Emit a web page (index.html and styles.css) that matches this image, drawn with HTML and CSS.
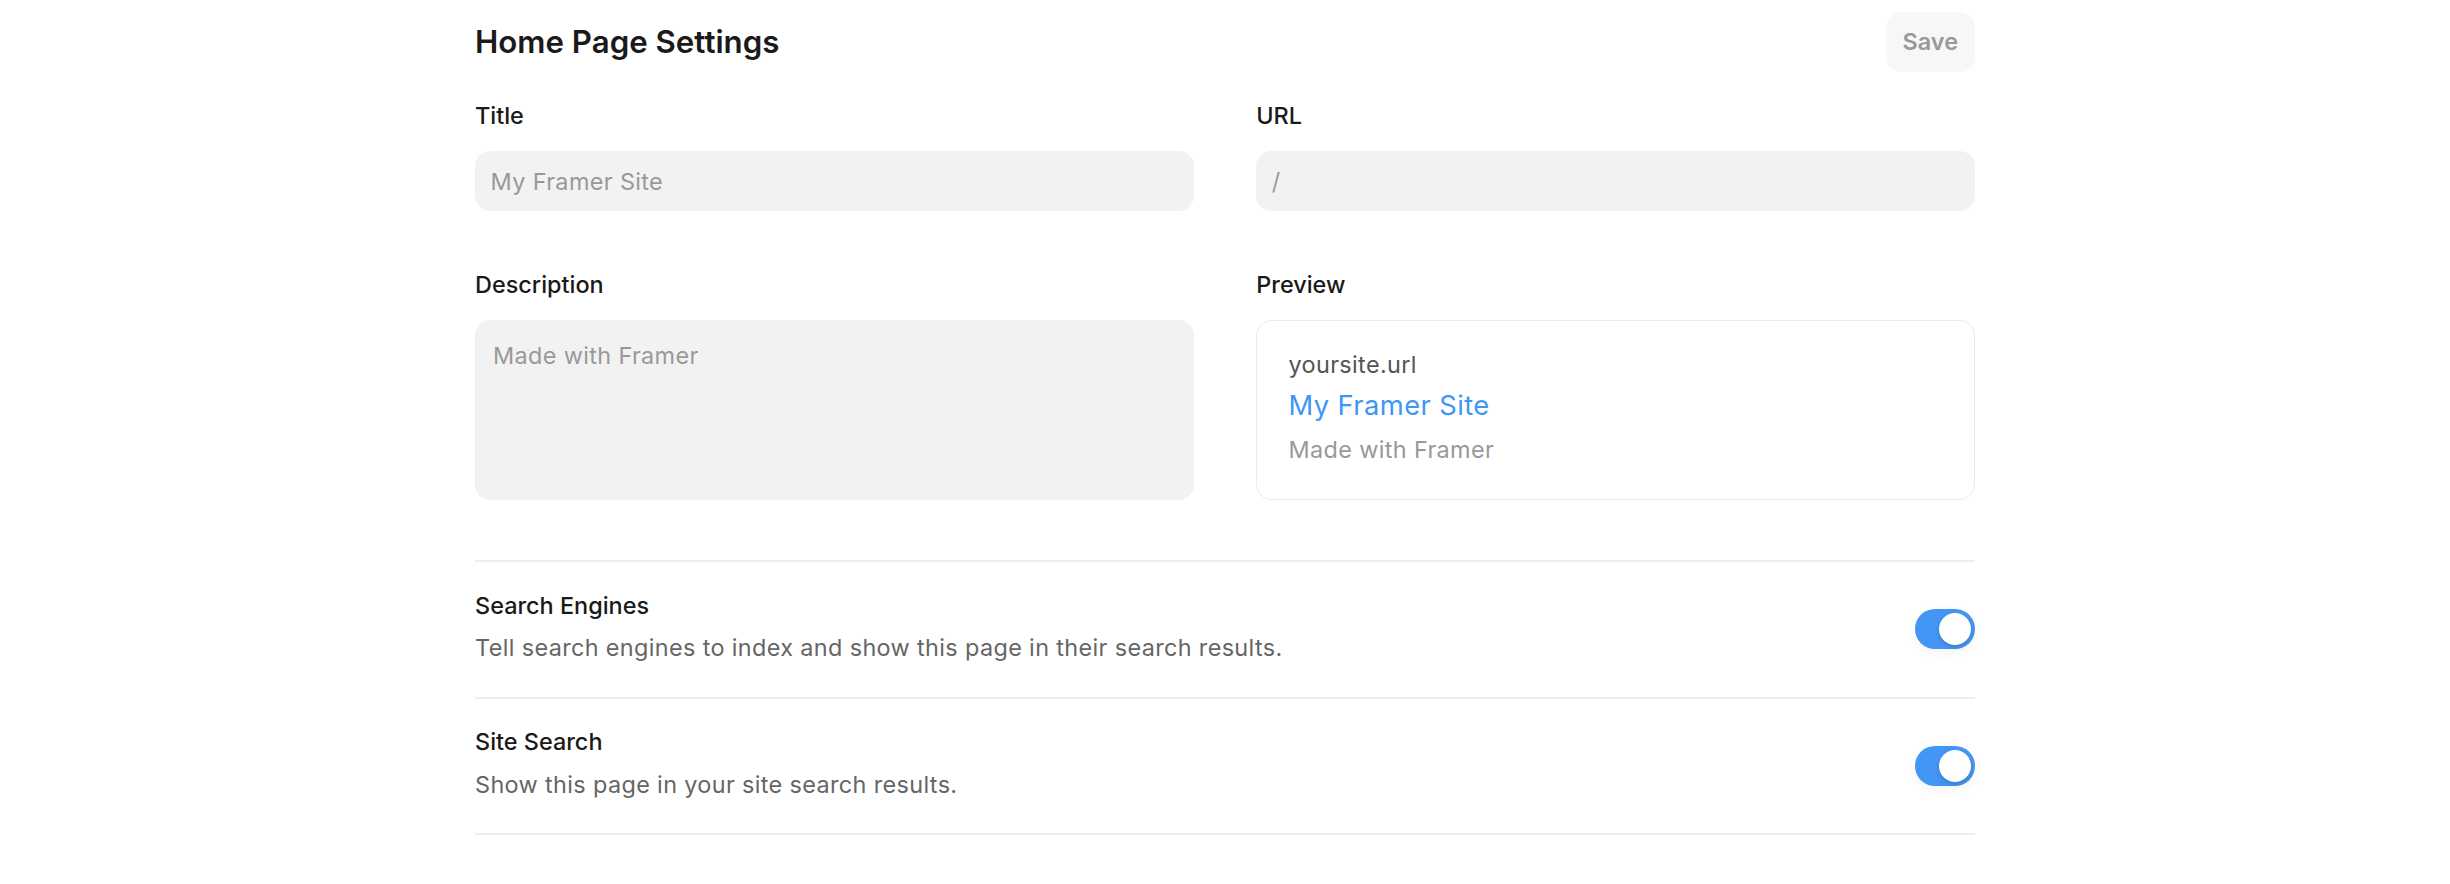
FILE: index.html
```html
<!DOCTYPE html>
<html lang="en">
<head>
<meta charset="utf-8">
<title>Home Page Settings</title>
<link rel="stylesheet" href="styles.css">
</head>
<body>
<main class="page">
  <header class="header">
    <h1 class="heading">Home Page Settings</h1>
    <button class="save" type="button">Save</button>
  </header>

  <section class="form">
    <div class="field">
      <div class="label">Title</div>
      <div class="input">My Framer Site</div>
    </div>
    <div class="field">
      <div class="label">URL</div>
      <div class="input">/</div>
    </div>
    <div class="field">
      <div class="label">Description</div>
      <div class="textarea">Made with Framer</div>
    </div>
    <div class="field">
      <div class="label">Preview</div>
      <div class="preview">
        <div class="preview-url">yoursite.url</div>
        <div class="preview-title">My Framer Site</div>
        <div class="preview-desc">Made with Framer</div>
      </div>
    </div>
  </section>

  <section class="rows">
    <div class="row">
      <div class="row-text">
        <div class="row-title">Search Engines</div>
        <div class="row-desc">Tell search engines to index and show this page in their search results.</div>
      </div>
      <div class="toggle"><div class="knob"></div></div>
    </div>
    <div class="row">
      <div class="row-text">
        <div class="row-title">Site Search</div>
        <div class="row-desc">Show this page in your site search results.</div>
      </div>
      <div class="toggle"><div class="knob"></div></div>
    </div>
  </section>
</main>
</body>
</html>
```

FILE: styles.css
```css
* {
  box-sizing: border-box;
}

body {
  margin: 0;
  background: #ffffff;
  font-family: Inter, "Noto Sans", "Liberation Sans", sans-serif;
  color: #1a1a1a;
}

.page {
  width: 1500px;
  margin: 0 auto;
  padding-top: 12px;
}

.header {
  display: flex;
  justify-content: space-between;
  align-items: center;
  height: 60px;
}

.heading {
  margin: 0;
  font-size: 31.25px;
  font-weight: 600;
  line-height: 38px;
  color: #1a1a1a;
}

.save {
  height: 60px;
  padding: 0 17px;
  border: none;
  border-radius: 15.6px;
  background: #f7f7f7;
  color: #999999;
  font-family: Inter, "Noto Sans", "Liberation Sans", sans-serif;
  font-size: 23.44px;
  font-weight: 600;
  line-height: 1;
}

.form {
  display: grid;
  grid-template-columns: 1fr 1fr;
  column-gap: 62.5px;
  row-gap: 59.5px;
  margin-top: 29.5px;
}

.field {
  display: flex;
  flex-direction: column;
  gap: 21.5px;
}

.label {
  font-size: 23.44px;
  font-weight: 500;
  line-height: 28px;
  color: #1a1a1a;
}

.input {
  display: flex;
  align-items: center;
  height: 60px;
  padding: 0 15.6px;
  border-radius: 15.6px;
  background: #f2f2f2;
  font-size: 23.44px;
  letter-spacing: 0.015em;
  color: #999999;
}

.textarea {
  height: 180px;
  padding: 18px;
  border-radius: 15.6px;
  background: #f2f2f2;
  font-size: 23.44px;
  line-height: 1.5;
  letter-spacing: 0.015em;
  color: #999999;
}

.preview {
  height: 180px;
  padding: 28px 31.25px;
  border: 1.5px solid #ebebeb;
  border-radius: 15.6px;
}

.preview-url {
  font-size: 23.44px;
  line-height: 32px;
  letter-spacing: 0.015em;
  color: #555555;
  margin-bottom: 9px;
}

.preview-title {
  font-size: 27.34px;
  line-height: 32px;
  letter-spacing: 0.015em;
  color: #4096f4;
  margin-bottom: 12px;
}

.preview-desc {
  font-size: 23.44px;
  line-height: 32px;
  letter-spacing: 0.015em;
  color: #999999;
}

.rows {
  margin-top: 60px;
  border-bottom: 2px solid #eeeeee;
}

.row {
  display: flex;
  justify-content: space-between;
  align-items: center;
  padding: 27.5px 0 32.5px;
  border-top: 2px solid #eeeeee;
}

.row-text {
  display: flex;
  flex-direction: column;
  gap: 10.7px;
}

.row-title {
  font-size: 23.44px;
  font-weight: 500;
  line-height: 32px;
  color: #1a1a1a;
}

.row-desc {
  font-size: 23.44px;
  line-height: 32px;
  letter-spacing: 0.015em;
  color: #666666;
}

.toggle {
  display: flex;
  justify-content: flex-end;
  width: 60px;
  height: 40px;
  margin-top: 4px;
  padding: 4px;
  border-radius: 20px;
  background: #4396f3;
  box-shadow: 0 3px 12px rgba(0, 0, 0, 0.05);
}

.knob {
  width: 32px;
  height: 32px;
  border-radius: 50%;
  background: #ffffff;
  box-shadow: 0 2px 4px rgba(0, 0, 0, 0.18);
}
```
